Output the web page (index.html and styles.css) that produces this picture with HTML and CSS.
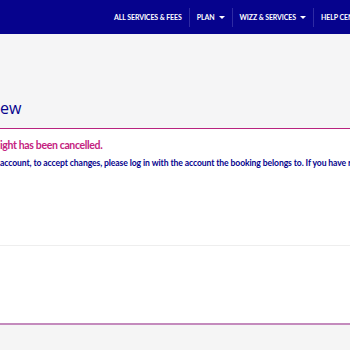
FILE: index.html
```html
<!DOCTYPE html>
<html>
<head>
<meta charset="utf-8">
<link rel="stylesheet" href="styles.css">
</head>
<body>
<header class="topbar">
  <nav class="nav">
    <a class="nav-item">ALL SERVICES &amp; FEES</a>
    <a class="nav-item">PLAN <span class="caret"></span></a>
    <a class="nav-item">WIZZ &amp; SERVICES <span class="caret"></span></a>
    <a class="nav-item">HELP CENTER</a>
  </nav>
</header>
<section class="hero">
  <h1 class="title">ew</h1>
</section>
<main class="content">
  <div class="notice">
    <p class="alert">ight has been cancelled.</p>
    <p class="info">account, to accept changes, please log in with the account the booking belongs to. If you have r</p>
  </div>
  <div class="spacer"></div>
</main>
<footer class="foot"></footer>
</body>
</html>
```
FILE: styles.css
```css
html, body { margin: 0; padding: 0; }
body {
  width: 350px;
  height: 350px;
  overflow: hidden;
  font-family: "Lato", "Noto Sans", sans-serif;
  background: #ffffff;
}
.topbar {
  height: 34px;
  background: #06038d;
  display: flex;
  align-items: center;
  overflow: hidden;
}
.nav {
  display: flex;
  align-items: center;
  margin-left: 107px;
  white-space: nowrap;
}
.nav-item {
  color: #ffffff;
  font-size: 7px;
  font-weight: 700;
  letter-spacing: -0.1px;
  padding: 0 7px;
  line-height: 19px;
  display: flex;
  align-items: center;
  gap: 4px;
}
.nav-item + .nav-item { border-left: 1px solid #2e2ba3; }
.caret {
  width: 0; height: 0;
  border-left: 3px solid transparent;
  border-right: 3px solid transparent;
  border-top: 3px solid #ffffff;
}
.hero {
  height: 94px;
  background: #f5f5f6;
  border-bottom: 1px solid #b8237f;
  overflow: hidden;
}
.title {
  margin: 0;
  padding-top: 62px;
  font-family: "Open Sans", sans-serif;
  font-size: 16px;
  font-weight: 400;
  color: #06038d;
  line-height: 24px;
  white-space: nowrap;
}
.content { overflow: hidden; }
.notice {
  padding-top: 9px;
  height: 107px;
  border-bottom: 1px solid #eeeeee;
  white-space: nowrap;
}
.alert {
  margin: 0;
  color: #c4237f;
  font-size: 10.5px;
  letter-spacing: -0.35px;
  font-weight: 700;
  line-height: 14px;
}
.info {
  margin: 4px 0 0 0;
  color: #06038d;
  font-size: 8.6px;
  letter-spacing: -0.1px;
  font-weight: 700;
  line-height: 14px;
}
.spacer { height: 77px; }
.foot {
  height: 40px;
  background: #f5f5f5;
  border-top: 2px solid #c48bbd;
}
```
